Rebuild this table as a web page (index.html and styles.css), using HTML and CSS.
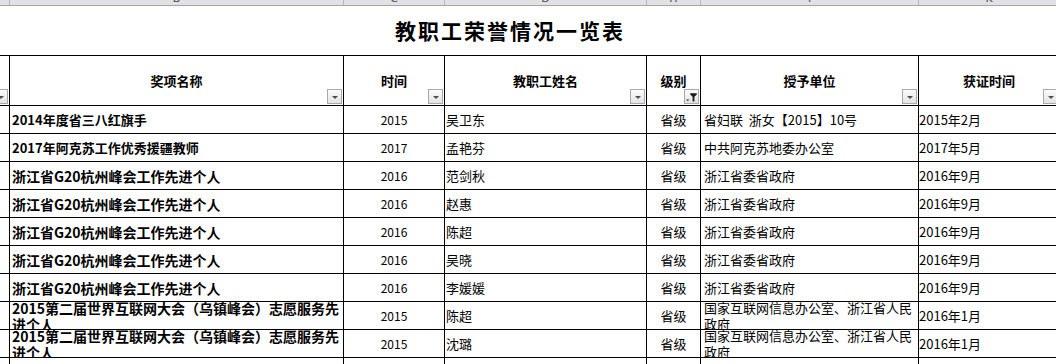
FILE: index.html
```html
<!DOCTYPE html>
<html lang="zh-CN">
<head>
<meta charset="utf-8">
<title>教职工荣誉情况一览表</title>
<link rel="stylesheet" href="styles.css">
</head>
<body>
<div class="colhead">
  <div class="ch"></div>
  <div class="ch">B</div>
  <div class="ch">C</div>
  <div class="ch">D</div>
  <div class="ch">H</div>
  <div class="ch">I</div>
  <div class="ch">K</div>
</div>
<h1 class="title">教职工荣誉情况一览表</h1>
<div class="sheet">
  <div class="hd"><span class="fb"></span></div>
  <div class="hd">奖项名称<span class="fb"></span></div>
  <div class="hd">时间<span class="fb"></span></div>
  <div class="hd">教职工姓名<span class="fb"></span></div>
  <div class="hd">级别<span class="fb on"><svg width="13" height="13" viewBox="0 0 13 13"><path d="M1 9.5h3.4L2.7 11.3z" fill="#444"/><path d="M5.2 3.2h6.6v1.2L9.4 6.8v4.6H7.6V6.8L5.2 4.4z" fill="#1a1a1a"/></svg></span></div>
  <div class="hd">授予单位<span class="fb"></span></div>
  <div class="hd">获证时间<span class="fb"></span></div>

  <div class="c"></div><div class="c nm sm">2014年度省三八红旗手</div><div class="c yr">2015</div><div class="c p">吴卫东</div><div class="c lv">省级</div><div class="c org">省妇联&nbsp; 浙女【2015】10号</div><div class="c dt">2015年2月</div>
  <div class="c"></div><div class="c nm sm">2017年阿克苏工作优秀援疆教师</div><div class="c yr">2017</div><div class="c p">孟艳芬</div><div class="c lv">省级</div><div class="c org">中共阿克苏地委办公室</div><div class="c dt">2017年5月</div>
  <div class="c"></div><div class="c nm">浙江省G20杭州峰会工作先进个人</div><div class="c yr">2016</div><div class="c p">范剑秋</div><div class="c lv">省级</div><div class="c org">浙江省委省政府</div><div class="c dt">2016年9月</div>
  <div class="c"></div><div class="c nm">浙江省G20杭州峰会工作先进个人</div><div class="c yr">2016</div><div class="c p">赵惠</div><div class="c lv">省级</div><div class="c org">浙江省委省政府</div><div class="c dt">2016年9月</div>
  <div class="c"></div><div class="c nm">浙江省G20杭州峰会工作先进个人</div><div class="c yr">2016</div><div class="c p">陈超</div><div class="c lv">省级</div><div class="c org">浙江省委省政府</div><div class="c dt">2016年9月</div>
  <div class="c"></div><div class="c nm">浙江省G20杭州峰会工作先进个人</div><div class="c yr">2016</div><div class="c p">吴晓</div><div class="c lv">省级</div><div class="c org">浙江省委省政府</div><div class="c dt">2016年9月</div>
  <div class="c"></div><div class="c nm">浙江省G20杭州峰会工作先进个人</div><div class="c yr">2016</div><div class="c p">李媛媛</div><div class="c lv">省级</div><div class="c org">浙江省委省政府</div><div class="c dt">2016年9月</div>
  <div class="c"></div><div class="c nm">2015第二届世界互联网大会（乌镇峰会）志愿服务先进个人</div><div class="c yr">2015</div><div class="c p">陈超</div><div class="c lv">省级</div><div class="c org">国家互联网信息办公室、浙江省人民政府</div><div class="c dt">2016年1月</div>
  <div class="c"></div><div class="c nm">2015第二届世界互联网大会（乌镇峰会）志愿服务先进个人</div><div class="c yr">2015</div><div class="c p">沈璐</div><div class="c lv">省级</div><div class="c org">国家互联网信息办公室、浙江省人民政府</div><div class="c dt">2016年1月</div>
  <div class="c"></div><div class="c"></div><div class="c"></div><div class="c"></div><div class="c"></div><div class="c"></div><div class="c"></div>
</div>
</body>
</html>
```
FILE: styles.css
```css
html, body {
  margin: 0;
  padding: 0;
  background: #fff;
}
body {
  width: 1056px;
  height: 364px;
  overflow: hidden;
  font-family: "Noto Sans CJK SC", "Noto Sans", sans-serif;
  color: #000;
}
.colhead {
  display: grid;
  grid-template-columns: 9px 333px 100px 201px 53px 217px 140px;
  column-gap: 1px;
  width: 1060px;
  height: 5px;
  background: #b4b7bb;
  border-bottom: 1px solid #a3a5a8;
  overflow: hidden;
}
.ch {
  background: #e0e2e6;
  text-align: center;
  font-family: "DejaVu Sans", sans-serif;
  font-size: 11px;
  line-height: 8px;
  margin-top: -5px;
  height: 10px;
  color: #4a4a4a;
}
.title {
  margin: 0;
  height: 49px;
  width: 1020px;
  text-align: center;
  font-size: 21px;
  line-height: 48px;
  font-weight: bold;
  letter-spacing: 2px;
}
.sheet {
  display: grid;
  grid-template-columns: 9px 333px 100px 201px 53px 217px 140px;
  grid-template-rows: 49px repeat(9, 27px) 6px;
  gap: 1px;
  padding-top: 1px;
  width: 1060px;
  background: #000;
}
.hd {
  position: relative;
  background: #fff;
  display: flex;
  align-items: center;
  justify-content: center;
  font-size: 13px;
  font-weight: bold;
  padding-bottom: 1px;
  overflow: hidden;
}
.fb {
  position: absolute;
  right: 1px;
  bottom: 1px;
  width: 15px;
  height: 15px;
  box-sizing: border-box;
  border: 1px solid #a7a9ac;
  background: linear-gradient(#fbfbfb, #e2e3e5);
}
.fb::after {
  content: "";
  position: absolute;
  left: 4px;
  top: 6px;
  border-left: 3px solid transparent;
  border-right: 3px solid transparent;
  border-top: 3px solid #4d4d4d;
}
.fb.on::after {
  display: none;
}
.fb svg {
  display: block;
}
.c {
  background: #fff;
  display: flex;
  align-items: center;
  overflow: hidden;
  font-size: 13px;
  line-height: 16px;
}
.nm {
  font-size: 14px;
  font-weight: bold;
  padding-left: 2px;
}
.nm.sm {
  font-size: 13px;
}
.yr {
  justify-content: center;
  font-size: 12px;
}
.p {
  padding-left: 1px;
}
.lv {
  justify-content: center;
}
.org {
  padding-left: 3px;
}
.dt {
  padding-left: 0;
}
```
